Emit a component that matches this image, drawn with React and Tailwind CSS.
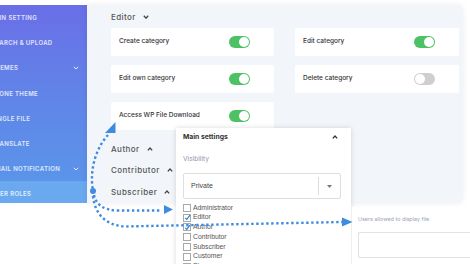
import React from "react";

const navItems = [
  { label: "MAIN SETTING", shift: "ml-[-11px]" },
  { label: "SEARCH & UPLOAD", shift: "ml-[-9px]" },
  { label: "THEMES", chevron: true, shift: "ml-[-9px]" },
  { label: "CLONE THEME", shift: "ml-[-9px]" },
  { label: "SINGLE FILE", shift: "ml-[-9px]" },
  { label: "TRANSLATE", shift: "ml-[-9px]" },
  { label: "EMAIL NOTIFICATION", chevron: true, shift: "ml-[-9px]" },
  { label: "USER ROLES", active: true, shift: "ml-[-9px]" },
];

function Toggle({ on }) {
  return (
    <div
      className={
        "w-[21px] h-[12px] rounded-full flex items-center px-[1px] " +
        (on ? "bg-[#4cc264] justify-end" : "bg-[#cfcfcf] justify-start")
      }
    >
      <div className="w-[10px] h-[10px] rounded-full bg-white" />
    </div>
  );
}

function Card({ label, on }) {
  return (
    <div className="h-[28px] bg-white rounded-[2px] flex items-center justify-between pl-[8px] pr-[24px]">
      <span className="text-[6.5px] text-[#333] font-medium">{label}</span>
      <Toggle on={on} />
    </div>
  );
}

function Caret({ up }) {
  return (
    <svg width="6" height="4" viewBox="0 0 6 4" className="ml-[7px]">
      {up ? (
        <path d="M0.8 3.4 L3 1 L5.2 3.4" fill="none" stroke="#444" strokeWidth="1.3" />
      ) : (
        <path d="M0.8 0.8 L3 3.2 L5.2 0.8" fill="none" stroke="#444" strokeWidth="1.3" />
      )}
    </svg>
  );
}

function Check({ checked, label }) {
  return (
    <div className="h-[9.8px] flex items-center">
      <div className="w-[8px] h-[8px] border border-[#a9a9a9] bg-white relative flex items-center justify-center">
        {checked && (
          <svg width="7" height="7" viewBox="0 0 7 7" className="absolute">
            <path d="M1.2 3.8 L2.8 5.4 L6 1.2" fill="none" stroke="#2f7fd6" strokeWidth="1.2" />
          </svg>
        )}
      </div>
      <span className="ml-[2px] text-[6.8px] text-[#555] leading-none">{label}</span>
    </div>
  );
}

export default function App() {
  return (
    <div
      className="relative w-[470px] h-[264px] overflow-hidden bg-white"
      style={{ fontFamily: "Inter, 'Noto Sans', sans-serif" }}
    >
      <div className="pt-[5px] flex">
        {/* Sidebar */}
        <div className="w-[87px] h-[198px] overflow-hidden bg-gradient-to-b from-[#6a6ee7] via-[#5f86e8] to-[#5a98ea]">
          {navItems.map((it) => (
            <div
              key={it.label}
              className={
                "h-[25.2px] flex items-center justify-between pr-[8px] " +
                (it.active ? "bg-[#6aa9ef]" : "")
              }
            >
              <span className={"whitespace-nowrap text-[6px] font-semibold tracking-[0.35px] text-white/80 " + it.shift}>
                {it.label}
              </span>
              {it.chevron && (
                <svg width="6" height="4" viewBox="0 0 6 4">
                  <path d="M0.8 0.8 L3 3 L5.2 0.8" fill="none" stroke="#e6ecfb" strokeWidth="1" />
                </svg>
              )}
            </div>
          ))}
        </div>

        {/* Main panel */}
        <div className="w-[376px] h-[198px] bg-[#f2f5fa] rounded-r-[6px] shadow-[0_0_6px_rgba(0,0,0,0.08)] pl-[24px]">
          <div className="mt-[5px] h-[14px] flex items-center">
            <span className="text-[8px] font-medium text-[#555] tracking-[0.4px]">Editor</span>
            <Caret />
          </div>
          <div className="mt-[4px] grid grid-cols-[163px_164px] gap-x-[21px] gap-y-[9px]">
            <Card label="Create category" on />
            <Card label="Edit category" on />
            <Card label="Edit own category" on />
            <Card label="Delete category" on={false} />
            <Card label="Access WP File Download" on />
          </div>
          <div className="mt-[8px]">
            {["Author", "Contributor", "Subscriber"].map((r) => (
              <div key={r} className="h-[21.5px] flex items-center">
                <span className="text-[8px] font-medium text-[#555] tracking-[0.45px]">{r}</span>
                <Caret up />
              </div>
            ))}
          </div>
        </div>
      </div>

      {/* Main settings dropdown overlay */}
      <div className="absolute left-[176px] top-[128px] w-[175px] h-[140px] bg-white shadow-[0_0_5px_rgba(0,0,0,0.15)] px-[7px]">
        <div className="h-[18px] flex items-center justify-between pr-[6px]">
          <span className="text-[6.8px] font-bold text-[#333]">Main settings</span>
          <svg width="6" height="4" viewBox="0 0 6 4">
            <path d="M0.8 3.4 L3 1 L5.2 3.4" fill="none" stroke="#333" strokeWidth="1.3" />
          </svg>
        </div>
        <div className="mt-[9px] h-[10px] flex items-center">
          <span className="text-[6.6px] text-[#8e96a8]">Visibility</span>
        </div>
        <div className="mt-[8px] w-[158px] h-[26px] border border-[#dedede] rounded-[2px] flex items-center">
          <span className="ml-[7px] flex-1 text-[7px] text-[#444]" style={{ fontFamily: "'Liberation Sans', Arial, sans-serif" }}>
            Private
          </span>
          <div className="w-px h-[18px] bg-[#dcdcdc]" />
          <div className="w-[21px] flex justify-center">
            <svg width="5" height="3" viewBox="0 0 5 3">
              <path d="M0 0 L5 0 L2.5 3 Z" fill="#777" />
            </svg>
          </div>
        </div>
        <div className="mt-[4px]" style={{ fontFamily: "'Liberation Sans', Arial, sans-serif" }}>
          <Check label="Administrator" />
          <Check label="Editor" checked />
          <Check label="Author" checked />
          <Check label="Contributor" />
          <Check label="Subscriber" />
          <Check label="Customer" />
          <Check label="Shop manager" />
        </div>
      </div>

      {/* Users allowed overlay */}
      <div className="absolute left-[352px] top-[207px] w-[120px] h-[60px] bg-white pl-[6px] pt-[9px]">
        <div className="h-[6px] flex items-center">
          <span className="text-[5.4px] text-[#9aa3b6] whitespace-nowrap">Users allowed to display file</span>
        </div>
        <div className="mt-[10px] h-[26px] border border-[#e2e2e2] rounded-[2px] border-r-0" />
      </div>

      {/* Dotted arrows */}
      <svg className="absolute left-0 top-0 pointer-events-none" width="470" height="264" viewBox="0 0 470 264">
        <g fill="none" stroke="#3f8be0" strokeWidth="2.4" strokeDasharray="2.4 2.6">
          <path d="M108 135 C 97 147 89 168 93 191" />
          <path d="M94 195 C 96 204 103 210.5 118 210.5 L 162 210.5" />
          <path d="M93 196 C 95 214 105 225 125 226.5 L 342 222" />
        </g>
        <circle cx="93" cy="191" r="3" fill="#3f8be0" />
        <polygon points="105,133 115.5,122 115.5,133" fill="#3f8be0" />
        <polygon points="164,205 173,209.5 164,214" fill="#3f8be0" />
        <polygon points="342,217.5 352.5,222 342,226.5" fill="#3f8be0" />
      </svg>
    </div>
  );
}
